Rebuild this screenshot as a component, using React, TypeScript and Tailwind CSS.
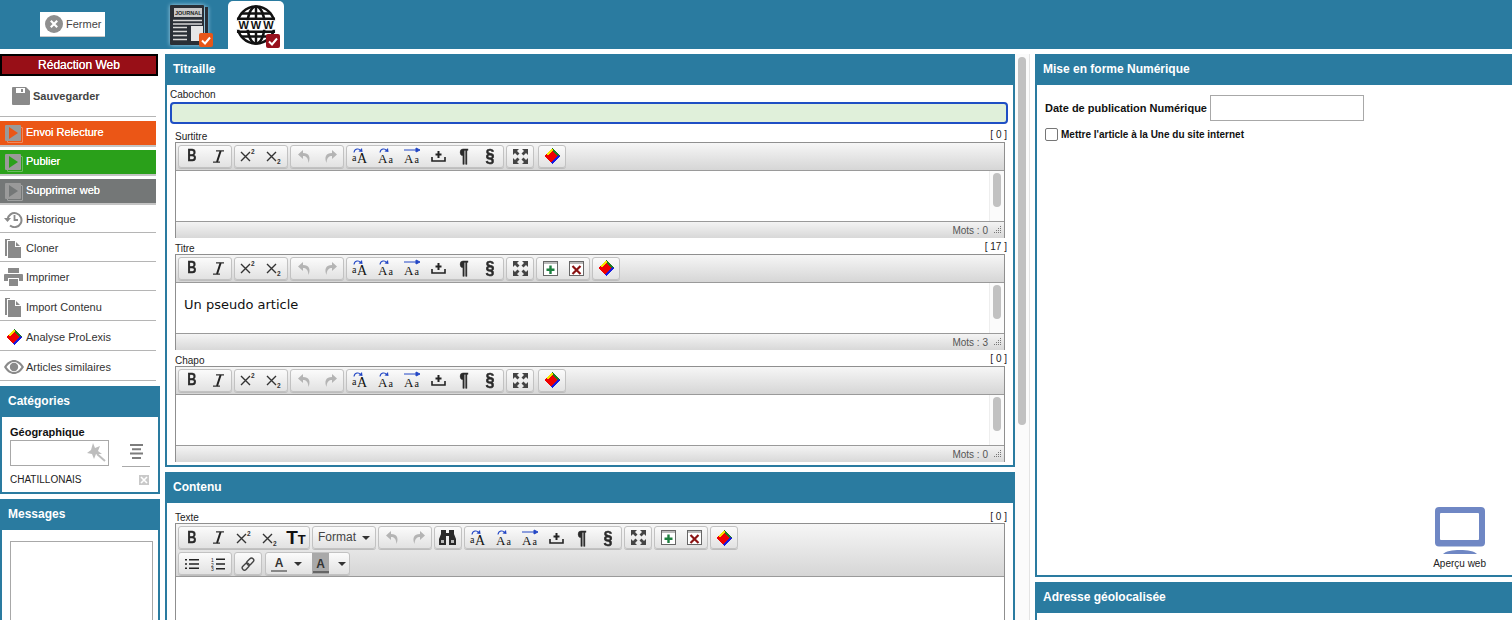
import type { ReactNode } from "react";

function ProLexis({ size = 18 }: { size?: number }) {
  return (
    <svg width={size} height={size} viewBox="0 0 18 18" shapeRendering="crispEdges">
      <path d="M9 1 L17 9 L9 17 L1 9 Z" fill="#f00000" />
      <path d="M9 1 L17 9 L15 10 L9 3 Z" fill="#1f7a1f" />
      <path d="M9 1 L3 7 L4.5 8.5 L10 3 Z" fill="#f4e400" />
      <path d="M17 9 L9 17 L8 15.5 L15.5 8 Z" fill="#1a1ae0" />
    </svg>
  );
}

function Play({ color }: { color: string }) {
  return (
    <span className="relative block w-[16px] h-[16px] ml-[5px] mr-[5px] shrink-0">
      <span className="absolute left-[2px] top-[2px] w-[16px] h-[16px] border border-white/30 rounded-[1px]" />
      <span className="absolute inset-0 bg-[#9a9a9a] rounded-[1px] flex items-center justify-center">
        <svg width="10" height="12" viewBox="0 0 10 12">
          <path d="M1 0 L10 6 L1 12 Z" fill={color} />
        </svg>
      </span>
    </span>
  );
}

function ActionBtn({ bg, color, label }: { bg: string; color: string; label: string }) {
  return (
    <div className="h-[24px] w-[156px] flex items-center text-white text-[11px] border-b-2 border-[#c4c4c4] box-content [text-shadow:0_0_0.3px_#fff]" style={{ backgroundColor: bg }}>
      <Play color={color} />
      <span className="pb-[2px]">{label}</span>
    </div>
  );
}

function SideRow({ icon, label, h = "h-[29px]", pt = "pt-[2px]" }: { icon: ReactNode; label: string; h?: string; pt?: string }) {
  return (
    <div className={`${h} ${pt} w-[156px] flex items-center border-b border-[#b5b5b5] text-[11px] text-[#333]`}>
      <span className="w-[26px] flex justify-center shrink-0 pl-[1px]">{icon}</span>
      <span>{label}</span>
    </div>
  );
}

function Docs() {
  return (
    <svg width="17" height="19" viewBox="0 0 17 19" fill="#8a8a8a">
      <path d="M0 0 H5 V1 H2 V17 H0 Z" />
      <path d="M3 2 H10 V8 H16 V19 H3 Z" />
      <path d="M11 3 L15 7 H11 Z" />
    </svg>
  );
}

function Panel({ title, className, bodyClass, children }: { title: string; className?: string; bodyClass?: string; children?: ReactNode }) {
  return (
    <section className={`border-2 border-[#2a7ba0] bg-white flex flex-col ${className ?? ""}`}>
      <h2 className="h-[30px] shrink-0 bg-[#2a7ba0] text-white text-[12px] font-bold flex items-center pl-[6px] pb-[3px] -mt-[1px]">
        {title}
      </h2>
      <div className={`flex-1 min-h-0 ${bodyClass ?? ""}`}>{children}</div>
    </section>
  );
}

function Group({ w, className, children }: { w?: number; className?: string; children: ReactNode }) {
  return (
    <div
      className={`h-[23px] flex items-center border border-[#c2c2c2] rounded-[3px] bg-gradient-to-b from-[#fbfbfb] to-[#e2e2e2] shadow-[0_1px_0_#bdbdbd] ${className ?? ""}`}
      style={w ? { width: w } : undefined}
    >
      {children}
    </div>
  );
}

function Tool({ children, w = 26 }: { children: ReactNode; w?: number }) {
  return (
    <span className="h-full flex items-center justify-center shrink-0" style={{ width: w }}>
      {children}
    </span>
  );
}

const serifIcon = { fontFamily: "'Liberation Serif', serif" };

function Bold() {
  return <span className="text-[16px] font-bold leading-none text-[#2a2a2a] scale-x-[0.8] [-webkit-text-stroke:0.3px_#2a2a2a]">B</span>;
}
function Italic() {
  return (
    <svg width="13" height="13" viewBox="0 0 13 13">
      <path d="M4 0.8 H12 M1 12.2 H8" stroke="#333" strokeWidth="1.2" fill="none" />
      <path d="M8.6 1 L5 12" stroke="#222" strokeWidth="2" fill="none" />
    </svg>
  );
}
function Script({ up }: { up?: boolean }) {
  return (
    <svg width="16" height="16" viewBox="0 0 16 16">
      <path d="M1 4 L10 13 M10 4 L1 13" stroke="#333" strokeWidth="1.4" fill="none" />
      <text x="11" y={up ? 6 : 15.5} fontSize="6.5" fontWeight="bold" fill="#333" fontFamily="'Liberation Sans', sans-serif">2</text>
    </svg>
  );
}
function Arrow({ flip }: { flip?: boolean }) {
  return (
    <svg width="13" height="13" viewBox="0 0 13 13" style={flip ? { transform: "scaleX(-1)" } : undefined}>
      <path d="M5 0 L0 4.5 L5 9 V6 C8 6 10 7.5 10.5 13 C13 7 11 3 5 3 Z" fill="#b4b4b4" />
    </svg>
  );
}
function CaseIcon({ mode }: { mode: "low" | "up" | "all" }) {
  return (
    <svg width="19" height="18" viewBox="0 0 19 18" style={serifIcon}>
      {mode === "all" ? (
        <path d="M1 3 H14 M13 1 L17 3 L13 5 Z" stroke="#2347c5" strokeWidth="1" fill="#2347c5" />
      ) : (
        <>
          <path d="M3 5.5 C3.5 1.5 8 1 9.5 3.5" stroke="#2347c5" strokeWidth="1.1" fill="none" />
          <path d="M7.5 4.5 L11.5 5 L11 1 Z" fill="#2347c5" />
        </>
      )}
      {mode === "low" ? (
        <>
          <text x="1" y="14" fontSize="10" fill="#111">a</text>
          <text x="6" y="15.5" fontSize="14" fill="#111">A</text>
        </>
      ) : (
        <>
          <text x="1" y="15.5" fontSize="13" fill="#111">A</text>
          <text x="11.5" y="15.5" fontSize="10" fill="#111">a</text>
        </>
      )}
    </svg>
  );
}
function Insert() {
  return (
    <svg width="15" height="12" viewBox="0 0 15 12">
      <path d="M1 7 V11 H14 V7" stroke="#222" strokeWidth="1.6" fill="none" />
      <path d="M7.5 1 V8 M4.5 4.5 H10.5" stroke="#222" strokeWidth="2" fill="none" />
    </svg>
  );
}
function Glyph({ c }: { c: string }) {
  return <span className="text-[18px] font-bold leading-none text-[#2a2a2a] scale-x-90 [-webkit-text-stroke:0.5px_#2a2a2a]">{c}</span>;
}
function Expand() {
  return (
    <svg width="15" height="15" viewBox="0 0 15 15" fill="#444">
      <path d="M0 0 H6 L4 2 L6.5 4.5 L4.5 6.5 L2 4 L0 6 Z" />
      <path d="M15 0 H9 L11 2 L8.5 4.5 L10.5 6.5 L13 4 L15 6 Z" />
      <path d="M0 15 H6 L4 13 L6.5 10.5 L4.5 8.5 L2 11 L0 9 Z" />
      <path d="M15 15 H9 L11 13 L8.5 10.5 L10.5 8.5 L13 11 L15 9 Z" />
    </svg>
  );
}
function TableIcon({ add }: { add?: boolean }) {
  const c = add ? "#1d7f3f" : "#8a1212";
  return (
    <svg width="15" height="15" viewBox="0 0 15 15">
      <rect x="0.5" y="0.5" width="14" height="14" fill="#fff" stroke="#666" />
      <rect x="1" y="1" width="13" height="2" fill="#bbb" />
      {add ? (
        <path d="M7.5 4.5 V13 M3.5 8.7 H11.5" stroke={c} strokeWidth="2.4" />
      ) : (
        <path d="M3.5 5 L11.5 13 M11.5 5 L3.5 13" stroke={c} strokeWidth="2.2" />
      )}
    </svg>
  );
}
function CommonCase() {
  return (
    <Group>
      <Tool><CaseIcon mode="low" /></Tool>
      <Tool><CaseIcon mode="up" /></Tool>
      <Tool><CaseIcon mode="all" /></Tool>
      <Tool><Insert /></Tool>
      <Tool><Glyph c="¶" /></Tool>
      <Tool><Glyph c="§" /></Tool>
    </Group>
  );
}
function Scrollbar() {
  return (
    <div className="w-[15px] border-l border-[#eeeeee] bg-[#fbfbfb] shrink-0 pt-[2px] flex justify-center">
      <div className="w-[8px] h-[34px] bg-[#c1c1c1] rounded-[4px]" />
    </div>
  );
}

function Editor({ label, count, text, table, words }: { label: string; count: string; text?: string; table?: boolean; words: number }) {
  return (
    <div className="ml-[8px] w-[830px] h-[112px]">
      <div className="h-[13px] flex justify-between items-center text-[10px] text-[#222] leading-none">
        <span className="pt-[2px]">{label}</span>
        <span className="mr-[-2px] pb-[2px]">[ {count} ]</span>
      </div>
      <div className="border border-[#8f8f8f] h-[96px] flex flex-col">
        <div className="h-[28px] shrink-0 border-b border-[#9a9a9a] bg-gradient-to-b from-[#f6f6f6] to-[#d6d6d6] flex items-center gap-[2px] pl-[2px] pb-[1px]">
          <Group><Tool><Bold /></Tool><Tool><Italic /></Tool></Group>
          <Group><Tool><Script up /></Tool><Tool><Script /></Tool></Group>
          <Group><Tool><Arrow /></Tool><Tool><Arrow flip /></Tool></Group>
          <CommonCase />
          <Group><Tool><Expand /></Tool></Group>
          {table && <Group><Tool><TableIcon add /></Tool><Tool><TableIcon /></Tool></Group>}
          <Group className={table ? "" : "ml-[2px]"}><Tool><ProLexis /></Tool></Group>
        </div>
        <div className="h-[50px] flex shrink-0">
          <div className="flex-1 pl-[8px] pt-[14px] text-[13px] leading-[16px] text-[#111] [font-family:'DejaVu_Sans',sans-serif]">{text}</div>
          <Scrollbar />
        </div>
        <div className="flex-1 border-t border-[#9a9a9a] bg-gradient-to-b from-[#f4f4f4] to-[#d8d8d8] flex items-center justify-end text-[10px] text-[#555] pr-[2px]">
          <span className="pt-[1px] mr-[1px]">Mots : {words}</span>
          <svg width="10" height="10" viewBox="0 0 10 10" className="ml-[3px]" fill="#777">
            <path d="M8 1h1v1H8zM8 3h1v1H8zM6 3h1v1H6zM8 5h1v1H8zM6 5h1v1H6zM4 5h1v1H4zM8 7h1v1H8zM6 7h1v1H6zM4 7h1v1H4zM2 7h1v1H2z" />
          </svg>
        </div>
      </div>
    </div>
  );
}

function ContentEditor() {
  return (
    <div className="ml-[8px] w-[830px]">
      <div className="h-[13px] mt-[7px] flex justify-between items-center text-[10px] text-[#222] leading-none">
        <span className="pt-[2px]">Texte</span>
        <span className="mr-[-2px]">[ 0 ]</span>
      </div>
      <div className="border-x border-t border-[#8f8f8f] h-[100px]">
        <div className="h-[53px] border-b border-[#9a9a9a] bg-gradient-to-b from-[#f6f6f6] to-[#d6d6d6] pl-[2px] pt-[2px] flex flex-col gap-[3px]">
          <div className="flex gap-[2px] h-[23px] items-center">
            <Group>
              <Tool><Bold /></Tool><Tool><Italic /></Tool><Tool><Script up /></Tool><Tool><Script /></Tool>
              <Tool><span className="text-[19px] font-bold leading-none text-[#111]">T<span className="text-[13px]">T</span></span></Tool>
            </Group>
            <Group w={64}>
              <span className="pl-[5px] pb-[2px] text-[12px] text-[#444]">Format</span>
              <span className="ml-[6px] border-x-[4px] border-t-[4px] border-x-transparent border-t-[#333]" />
            </Group>
            <Group><Tool><Arrow /></Tool><Tool><Arrow flip /></Tool></Group>
            <Group><Tool>
              <svg width="17" height="15" viewBox="0 0 17 15" fill="#2a2a2a" className="-ml-[2px]">
                <path d="M2 0 H7 V3 H10 V0 H15 V4 L17 9 V15 H10 V6 H7 V15 H0 V9 L2 4 Z" />
                <path d="M2 10 H5 V13 H2 Z M12 10 H15 V13 H12 Z" fill="#bbb" />
              </svg>
            </Tool></Group>
            <CommonCase />
            <Group><Tool><Expand /></Tool></Group>
            <Group><Tool><TableIcon add /></Tool><Tool><TableIcon /></Tool></Group>
            <Group><Tool><ProLexis /></Tool></Group>
          </div>
          <div className="flex gap-[2px] h-[23px] items-center">
            <Group>
              <Tool>
                <svg width="14" height="12" viewBox="0 0 14 12" fill="#222">
                  <path d="M0 1h2v1.6H0zM4 1h10v1.6H4zM0 5.2h2v1.6H0zM4 5.2h10v1.6H4zM0 9.4h2v1.6H0zM4 9.4h10v1.6H4z" />
                </svg>
              </Tool>
              <Tool>
                <svg width="14" height="14" viewBox="0 0 14 14" fill="#222">
                  <path d="M5 1.5h9v1.6H5zM5 6.2h9v1.6H5zM5 11h9v1.6H5z" />
                  <text x="0" y="5" fontSize="5" fontFamily="'Liberation Sans', sans-serif">1</text>
                  <text x="0" y="9.5" fontSize="5" fontFamily="'Liberation Sans', sans-serif">2</text>
                  <text x="0" y="14" fontSize="5" fontFamily="'Liberation Sans', sans-serif">3</text>
                </svg>
              </Tool>
            </Group>
            <Group><Tool>
              <svg width="14" height="14" viewBox="0 0 14 14" fill="none" stroke="#444" strokeWidth="1.4">
                <rect x="7" y="0.5" width="4.5" height="8" rx="2.2" transform="rotate(45 9.2 4.5)" />
                <rect x="2.5" y="5.5" width="4.5" height="8" rx="2.2" transform="rotate(45 4.7 9.5)" />
              </svg>
            </Tool></Group>
            <Group w={85} className="ml-[1px]">
              <span className="w-[26px] flex flex-col items-center">
                <span className="text-[12px] font-bold leading-[14px] text-[#333]">A</span>
                <span className="w-[16px] h-[2px] bg-[#888]" />
              </span>
              <span className="border-x-[4px] border-t-[4px] border-x-transparent border-t-[#333] ml-[2px]" />
              <span className="ml-[10px] w-[17px] h-[21px] bg-[#a9a9a9] flex flex-col items-center justify-end">
                <span className="text-[12px] font-bold leading-[14px] text-[#333]">A</span>
                <span className="w-[16px] h-[2px] bg-[#666] mb-[1px]" />
              </span>
              <span className="border-x-[4px] border-t-[4px] border-x-transparent border-t-[#333] ml-[9px]" />
            </Group>
          </div>
        </div>
      </div>
    </div>
  );
}

function Check({ bg }: { bg: string }) {
  return (
    <span className="w-[14px] h-[14px] rounded-[2px] flex items-center justify-center" style={{ backgroundColor: bg }}>
      <svg width="10" height="9" viewBox="0 0 10 9"><path d="M1 4.5 L4 7.5 L9 1.5" stroke="#fff" strokeWidth="2" fill="none" /></svg>
    </span>
  );
}

export default function App() {
  return (
    <div className="w-[1512px] h-[620px] overflow-hidden bg-white flex flex-col text-[#111] [font-family:'Liberation_Sans',Arial,sans-serif]">
      <header className="h-[49px] shrink-0 bg-[#2a7ba0] flex items-end">
        <div className="ml-[40px] mb-[12px] w-[65px] h-[25px] bg-white border-b border-[#c8c8c8] flex items-center text-[11px] text-[#444]">
          <svg width="18" height="18" viewBox="0 0 18 18" className="ml-[5px] mr-[3px]">
            <circle cx="9" cy="9" r="9" fill="#8f8f8f" />
            <path d="M5.8 5.8 L12.2 12.2 M12.2 5.8 L5.8 12.2" stroke="#fff" strokeWidth="2.2" />
          </svg>
          Fermer
        </div>
        <div className="ml-[65px] mb-[2px] relative w-[43px] h-[42px]">
          <svg width="39" height="40" viewBox="0 0 39 40" className="[filter:drop-shadow(0_0_2px_#a9d3e6)]">
            <rect x="35" y="2" width="3" height="37" fill="#2a2f36" />
            <rect x="0" y="0" width="34" height="40" rx="1" fill="#2a2f36" />
            <rect x="4" y="3" width="28" height="9" fill="#c9c9c9" />
            <path d="M3 15.5 H32 M3 19 H32 M3 22.5 H17 M3 26.5 H17 M3 30.5 H17 M3 34.5 H17" stroke="#d8d8d8" strokeWidth="1.4" />
            <rect x="21" y="21" width="12" height="15" fill="#e6e6e6" />
          </svg>
          <span className="absolute left-[5px] top-[4px] text-[5.5px] font-bold text-[#222] leading-[8px]">JOURNAL</span>
          <span className="absolute left-[29px] bottom-0"><Check bg="#e85618" /></span>
        </div>
        <div className="ml-[15px] w-[56px] h-[48px] bg-white rounded-t-[5px] relative pt-[4px] pl-[8px]">
          <svg width="40" height="40" viewBox="0 0 42 42" fill="none" stroke="#111" strokeWidth="2.6">
            <circle cx="21" cy="21" r="19.5" />
            <ellipse cx="21" cy="21" rx="9" ry="19.5" />
            <path d="M21 1 V14 M21 28 V41 M5 9 H37 M5 33 H37 M1 14.5 H41 M1 28 H41" />
            <rect x="-1" y="16" width="44" height="10" fill="#fff" stroke="none" />
          </svg>
          <span className="absolute left-[8px] top-[18px] w-[40px] text-center text-[11px] font-bold leading-[12px] tracking-[2px] pl-[2px] text-[#111]">WWW</span>
          <span className="absolute left-[38px] bottom-[1px]"><Check bg="#98101c" /></span>
        </div>
      </header>

      <div className="flex flex-1 min-h-0 mt-[5px]">
        <aside className="w-[160px] shrink-0">
          <div className="w-[158px] h-[22px] bg-[#980f17] border-2 border-black text-white text-[12px] flex items-center justify-center [text-shadow:0_0_0.3px_#fff]">Rédaction Web</div>
          <div className="w-[156px] h-[41px] border-b border-[#b5b5b5] flex items-center pl-[12px] text-[11px] font-bold text-[#444]">
            <svg width="18" height="18" viewBox="0 0 18 18" fill="#8a8a8a" className="mr-[3px] -mt-[1px]">
              <path d="M1 0 H14 L18 4 V17 a1 1 0 0 1 -1 1 H1 a1 1 0 0 1 -1 -1 V1 a1 1 0 0 1 1 -1 Z M4 1 V6 H13 V1 Z M9 2 H11 V5 H9 Z" fillRule="evenodd" />
            </svg>
            Sauvegarder
          </div>
          <div className="mt-[4px] flex flex-col gap-[3px]">
            <ActionBtn bg="#eb5616" color="#eb5616" label="Envoi Relecture" />
            <ActionBtn bg="#2aa01a" color="#2aa01a" label="Publier" />
            <ActionBtn bg="#747777" color="#747777" label="Supprimer web" />
          </div>
          <SideRow label="Historique" h="h-[28px]" pt="pt-[1px]" icon={
            <svg width="19" height="17" viewBox="0 0 19 17" fill="none" stroke="#8a8a8a" strokeWidth="2">
              <path d="M3.5 8.5 A7 7 0 1 1 6 14.5" />
              <path d="M0 7 L3.5 11 L7 7" fill="#8a8a8a" stroke="none" />
              <path d="M10.5 4 V9 H14" strokeWidth="1.8" />
            </svg>
          } />
          <SideRow label="Cloner" icon={<Docs />} />
          <SideRow label="Imprimer" icon={
            <svg width="19" height="18" viewBox="0 0 19 18" fill="#8a8a8a">
              <path d="M4 0 H15 V5 H4 Z" />
              <path d="M1 6 H18 a1 1 0 0 1 1 1 V13 H15 V10 H4 V13 H0 V7 a1 1 0 0 1 1 -1 Z" />
              <path d="M5 11 H14 V18 H5 Z" />
            </svg>
          } />
          <SideRow label="Import Contenu" h="h-[30px]" pt="pt-[3px]" icon={<Docs />} />
          <SideRow label="Analyse ProLexis" h="h-[30px]" pt="pt-[3px]" icon={<ProLexis />} />
          <SideRow label="Articles similaires" h="h-[30px]" pt="pt-[3px]" icon={
            <svg width="20" height="14" viewBox="0 0 20 14" fill="#8a8a8a">
              <path fillRule="evenodd" d="M0 7 C3 2 6.5 0 10 0 C13.5 0 17 2 20 7 C17 12 13.5 14 10 14 C6.5 14 3 12 0 7 Z M2.5 7 C4.5 10 7 12 10 12 C13 12 15.5 10 17.5 7 C15.5 4 13 2 10 2 C7 2 4.5 4 2.5 7 Z" />
              <circle cx="10" cy="7" r="4.2" />
            </svg>
          } />
          <Panel title="Catégories" className="mt-[5px] h-[108px]" bodyClass="pl-[8px]">
            <div className="text-[11px] font-bold pt-[9px] leading-[13px] mb-[1px]">Géographique</div>
            <div className="flex items-end">
              <div className="w-[99px] h-[26px] border border-[#a8a8a8] flex items-center justify-end pr-[2px]">
                <svg width="20" height="20" viewBox="0 0 20 20" fill="#bdbdbd">
                  <path d="M7 0 L9 5 L14 3 L12 8 L16 11 L10 11 L8 16 L6 11 L1 10 L5 7 Z" />
                  <path d="M11 11 L19 18" stroke="#bdbdbd" strokeWidth="2" />
                </svg>
              </div>
              <div className="ml-[13px] w-[28px] h-[26px] border-b border-[#aaa] flex justify-center pt-[3px] mb-[-1px]">
                <svg width="15" height="15" viewBox="0 0 15 15" fill="#7d7d7d">
                  <path d="M1 0h13v2H1zM3 4.3h9v2H3zM1 8.6h13v2H1zM3 13h9v2H3z" />
                </svg>
              </div>
            </div>
            <div className="flex justify-between items-center text-[10px] mt-[6px] pr-[9px] text-[#222]">
              <span>CHATILLONAIS</span>
              <span className="w-[10px] h-[10px] bg-[#c9c9c9] flex items-center justify-center">
                <svg width="8" height="8" viewBox="0 0 8 8"><path d="M1 1 L7 7 M7 1 L1 7" stroke="#fff" strokeWidth="1.6" /></svg>
              </span>
            </div>
          </Panel>
          <Panel title="Messages" className="mt-[5px] h-[200px]" bodyClass="pl-[8px] pt-[11px]">
            <div className="w-[143px] h-[120px] border border-[#a8a8a8]" />
          </Panel>
        </aside>

        <main className="w-[850px] ml-[5px] shrink-0">
          <Panel title="Titraille" className="h-[413px]" bodyClass="pt-[4px]">
            <div className="pl-[3px] text-[10px] leading-[12px] text-[#222]">Cabochon</div>
            <div className="ml-[3px] w-[838px] h-[22px] mt-[1px] bg-[#e0f0da] border-2 border-[#1f4fc4] rounded-[4px]" />
            <div className="mt-[5px]">
              <Editor label="Surtitre" count="0" words={0} />
              <Editor label="Titre" count="17" words={3} text="Un pseudo article" table />
              <Editor label="Chapo" count="0" words={0} />
            </div>
          </Panel>
          <Panel title="Contenu" className="mt-[5px] h-[200px]">
            <ContentEditor />
          </Panel>
        </main>

        <div className="w-[15px] shrink-0 border-r border-[#e4e4e4] pt-[3px] flex justify-center bg-[#fbfbfb]">
          <div className="w-[8px] h-[368px] bg-[#c1c1c1] rounded-[4px]" />
        </div>

        <div className="ml-[5px] flex-1 min-w-0">
          <Panel title="Mise en forme Numérique" className="h-[523px] border-r-0" bodyClass="pl-[8px] flex flex-col">
            <div className="flex items-center mt-[10px] text-[11px] font-bold">
              Date de publication Numérique
              <div className="ml-[3px] w-[154px] h-[26px] border border-[#a8a8a8]" />
            </div>
            <div className="flex items-center mt-[6px] text-[10px] font-bold">
              <span className="w-[13px] h-[13px] border border-[#767676] rounded-[2px] mr-[3px]" />
              Mettre l'article à la Une du site internet
            </div>
            <div className="mt-auto self-end mr-[26px] mb-[5px] flex flex-col items-center">
              <svg width="50" height="47" viewBox="0 0 50 47">
                <rect x="0" y="0" width="50" height="39.5" rx="4" fill="#6f87c4" />
                <rect x="5" y="6" width="39" height="27" rx="1" fill="#fff" />
                <path d="M8 47 C12 41.5 38 41.5 42 47 Z" fill="#6f87c4" />
              </svg>
              <span className="text-[10px] mt-[4px] leading-[12px] text-[#222]">Aperçu web</span>
            </div>
          </Panel>
          <Panel title="Adresse géolocalisée" className="mt-[5px] h-[120px] border-r-0" />
        </div>
      </div>
    </div>
  );
}
